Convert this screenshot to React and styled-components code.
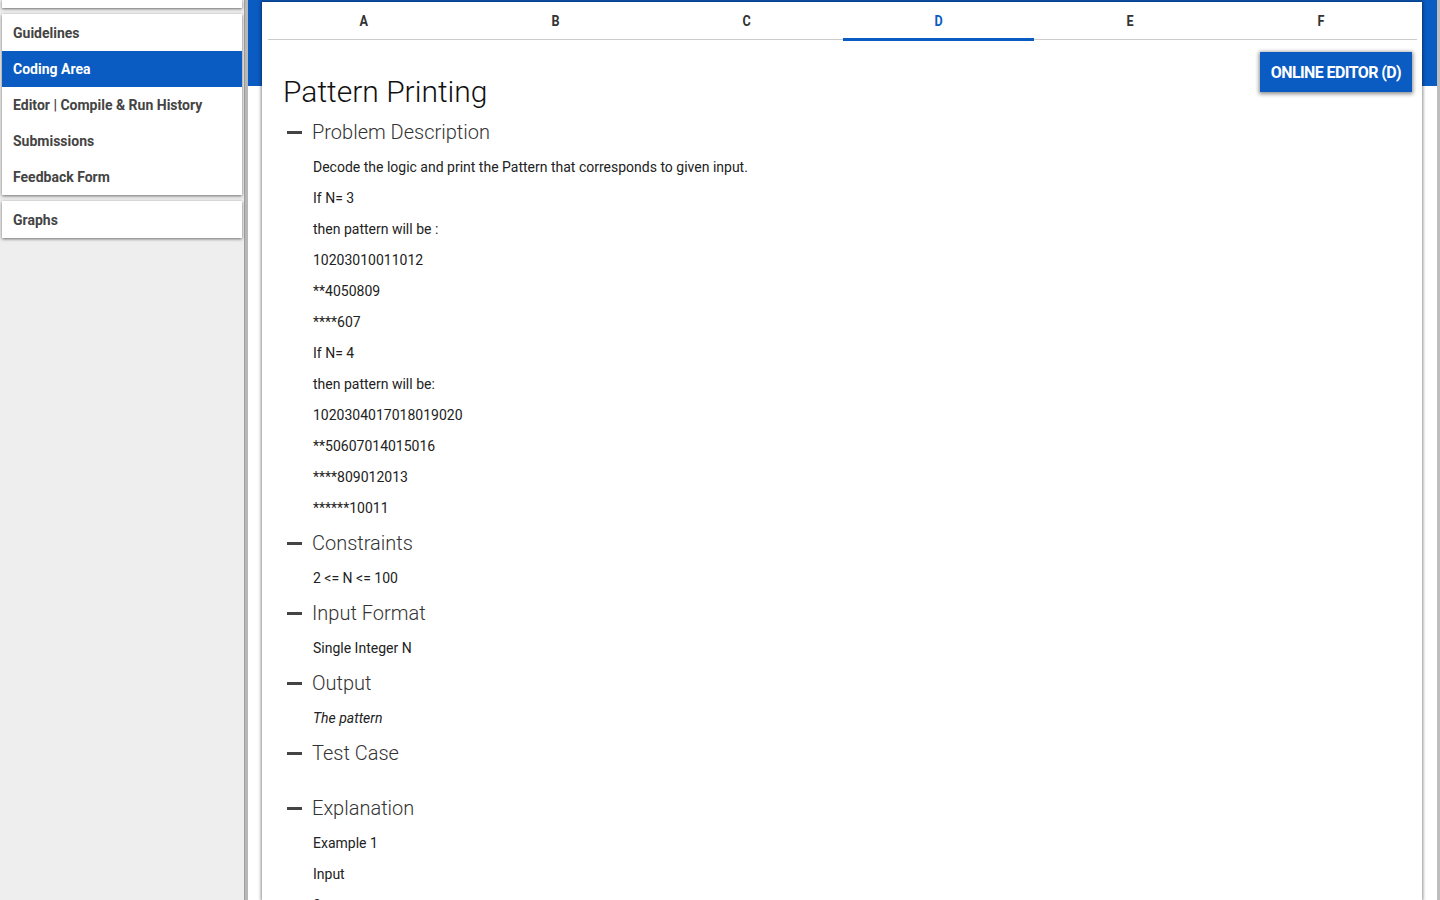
import React from "react";
import styled, { createGlobalStyle } from "styled-components";

const BLUE = "#0a5bc2";

const Global = createGlobalStyle`
  html, body { margin: 0; padding: 0; background: #fff; }
  body { font-family: Roboto, "Noto Sans", "Liberation Sans", sans-serif; overflow: hidden; }
  * { box-sizing: border-box; }
`;

const Layout = styled.div`
  display: flex;
  width: 1440px;
  height: 900px;
  overflow: hidden;
`;

const Sidebar = styled.aside`
  width: 248px;
  flex: none;
  background: #eeeeee;
  border-right: 3px solid #b8b8b8;
  box-shadow: inset -1px 0 0 #a0a0a0;
  display: flex;
  flex-direction: column;
  gap: 6px;
  padding: 0 3px 0 2px;
`;

const NavCard = styled.nav`
  background: #fff;
  box-shadow: 0 1px 3px rgba(0, 0, 0, 0.55);
  display: flex;
  flex-direction: column;
  padding-top: 1px;
  height: ${(p) => (p.$clip ? `${p.$clip}px` : "auto")};
`;

const NavItem = styled.a`
  display: block;
  height: 36px;
  line-height: 36px;
  padding-left: 11px;
  font-size: 14px;
  font-weight: 700;
  color: ${(p) => (p.$active ? "#fff" : "#444")};
  background: ${(p) => (p.$active ? BLUE : "transparent")};
  text-decoration: none;
  white-space: nowrap;
`;

const Main = styled.main`
  flex: 1;
  min-width: 0;
  background: linear-gradient(${BLUE} 0 86px, #fff 86px);
  padding: 2px 15px 0 14px;
  border-right: 3px solid #bdbdbd;
  display: flex;
`;

const Card = styled.section`
  flex: 1;
  background: #fff;
  box-shadow: 0 0 3px 1px rgba(0, 0, 0, 0.45);
  display: flex;
  flex-direction: column;
`;

const Tabs = styled.div`
  display: grid;
  grid-template-columns: repeat(6, 1fr);
  margin: 0 5px 0 6px;
  border-bottom: 1px solid #cccccc;
  height: 38px;
`;

const Tab = styled.button`
  all: unset;
  text-align: center;
  font-family: Roboto, sans-serif;
  font-size: 14px;
  font-weight: 700;
  color: ${(p) => (p.$active ? BLUE : "#333")};
  border-bottom: 3px solid ${(p) => (p.$active ? BLUE : "transparent")};
  margin-bottom: -1px;
  padding-top: 2px;
  line-height: 34px;
`;

const TabLabel = styled.span`
  display: inline-block;
  transform: scaleX(0.9);
`;

const Content = styled.div`
  padding: 12px 10px 0 21px;
`;

const TopRow = styled.div`
  display: flex;
  justify-content: space-between;
  align-items: flex-start;
`;

const Title = styled.h1`
  margin: 0;
  padding-top: 22px;
  font-size: 30px;
  line-height: 36px;
  font-weight: 300;
  color: #111;
`;

const EditorButton = styled.button`
  all: unset;
  height: 40px;
  padding: 0 11px;
  background: ${BLUE};
  color: #fff;
  font-family: Roboto, sans-serif;
  font-size: 16px;
  font-weight: 700;
  letter-spacing: -0.6px;
  box-shadow: 0 1px 4px 1px rgba(0, 0, 0, 0.45);
  display: flex;
  align-items: center;
`;

const Sections = styled.div`
  margin-top: 4.5px;
`;

const SectionHead = styled.h2`
  margin: 0;
  height: 35px;
  display: flex;
  align-items: center;
  gap: 10px;
  padding-left: 4px;
  font-size: 20px;
  font-weight: 300;
  color: #333;
`;

const Dash = styled.span`
  width: 15px;
  height: 3px;
  background: #444;
  flex: none;
`;

const SectionBody = styled.div`
  padding: 2px 0 2px 30px;
  min-height: ${(p) => (p.$empty ? "20px" : "0")};
`;

const Para = styled.p`
  margin: 0;
  font-size: 14px;
  line-height: 31px;
  color: #222;
  font-style: ${(p) => (p.$italic ? "italic" : "normal")};
`;

const sections = [
  {
    title: "Problem Description",
    lines: [
      "Decode the logic and print the Pattern that corresponds to given input.",
      "If N= 3",
      "then pattern will be :",
      "10203010011012",
      "**4050809",
      "****607",
      "If N= 4",
      "then pattern will be:",
      "1020304017018019020",
      "**50607014015016",
      "****809012013",
      "******10011",
    ],
  },
  { title: "Constraints", lines: ["2 <= N <= 100"] },
  { title: "Input Format", lines: ["Single Integer N"] },
  { title: "Output", lines: ["The pattern"], italic: true },
  { title: "Test Case", lines: [] },
  { title: "Explanation", lines: ["Example 1", "Input", "3"] },
];

export default function App() {
  return (
    <>
      <Global />
      <Layout>
        <Sidebar>
          <NavCard $clip={8} />
          <NavCard>
            <NavItem>Guidelines</NavItem>
            <NavItem $active>Coding Area</NavItem>
            <NavItem>Editor | Compile &amp; Run History</NavItem>
            <NavItem>Submissions</NavItem>
            <NavItem>Feedback Form</NavItem>
          </NavCard>
          <NavCard>
            <NavItem>Graphs</NavItem>
          </NavCard>
        </Sidebar>
        <Main>
          <Card>
            <Tabs>
              {["A", "B", "C", "D", "E", "F"].map((t) => (
                <Tab key={t} $active={t === "D"}>
                  <TabLabel>{t}</TabLabel>
                </Tab>
              ))}
            </Tabs>
            <Content>
              <TopRow>
                <Title>Pattern Printing</Title>
                <EditorButton>ONLINE EDITOR (D)</EditorButton>
              </TopRow>
              <Sections>
                {sections.map((s) => (
                  <div key={s.title}>
                    <SectionHead>
                      <Dash />
                      {s.title}
                    </SectionHead>
                    <SectionBody $empty={s.lines.length === 0}>
                      {s.lines.map((l, i) => (
                        <Para key={i} $italic={s.italic}>
                          {l}
                        </Para>
                      ))}
                    </SectionBody>
                  </div>
                ))}
              </Sections>
            </Content>
          </Card>
        </Main>
      </Layout>
    </>
  );
}
